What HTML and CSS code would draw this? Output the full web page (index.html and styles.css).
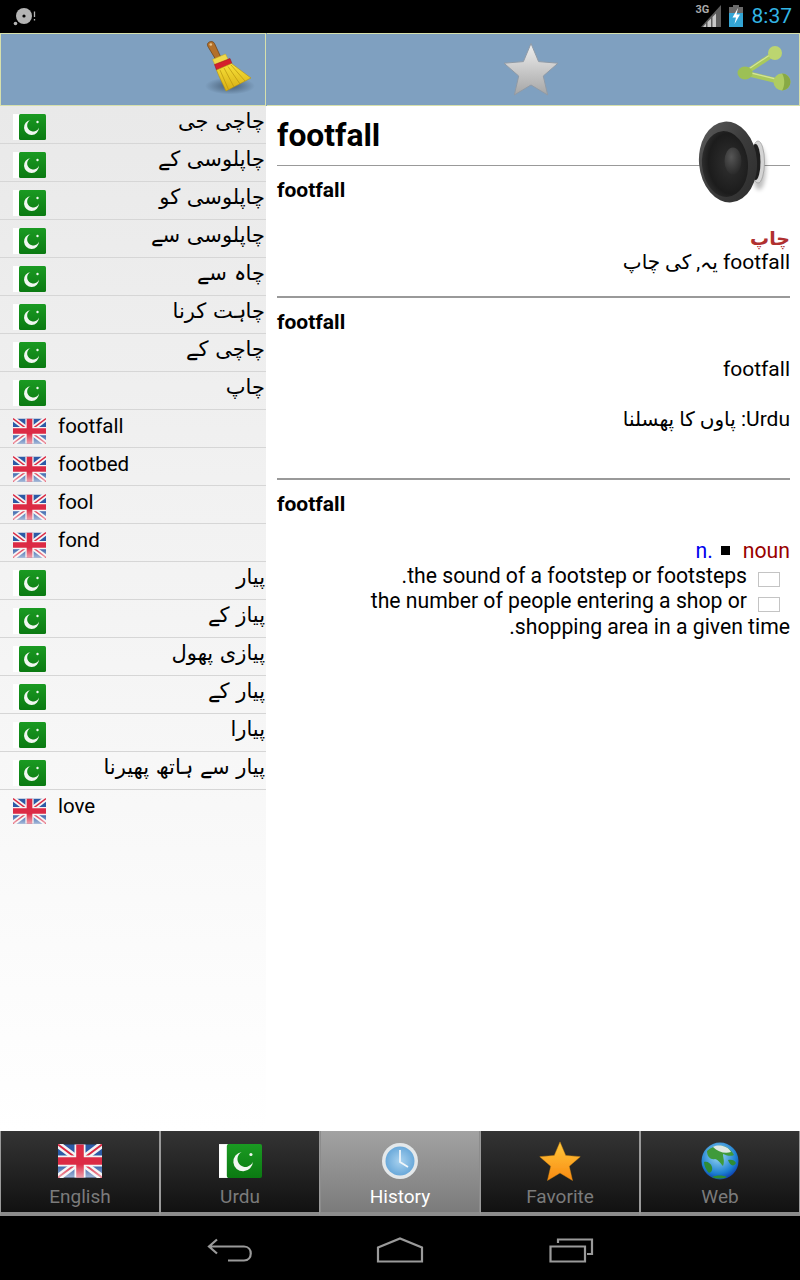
FILE: index.html
```html
<!DOCTYPE html>
<html lang="en">
<head>
<meta charset="utf-8">
<title>Dictionary</title>
<link rel="stylesheet" href="styles.css">
</head>
<body>
<svg class="defs" width="0" height="0" aria-hidden="true">
  <defs>
    <filter id="soft" x="-10%" y="-10%" width="120%" height="120%"><feGaussianBlur stdDeviation="0.5"/></filter>
    <filter id="blur" x="-40%" y="-40%" width="180%" height="180%"><feGaussianBlur stdDeviation="2"/></filter>
    <linearGradient id="gStar" x1="0" y1="0" x2="0" y2="1"><stop offset="0" stop-color="#f0f0f0"/><stop offset="1" stop-color="#a5a5a5"/></linearGradient>
    <linearGradient id="gFav" x1="0" y1="0" x2="0" y2="1"><stop offset="0" stop-color="#ffc93c"/><stop offset="1" stop-color="#f98a12"/></linearGradient>
    <linearGradient id="gGreen" x1="0" y1="0" x2="0" y2="1"><stop offset="0" stop-color="#1a9a22"/><stop offset="1" stop-color="#0b7a12"/></linearGradient>
    <linearGradient id="gBroom" x1="0" y1="0" x2="0" y2="1"><stop offset="0" stop-color="#f7e23a"/><stop offset="1" stop-color="#d8ae12"/></linearGradient>
    <linearGradient id="gBody" x1="0" y1="0" x2="1" y2="1"><stop offset="0" stop-color="#5e5e5e"/><stop offset="0.5" stop-color="#3c3c3c"/><stop offset="1" stop-color="#2c2c2c"/></linearGradient>
    <linearGradient id="gGloss" x1="0" y1="0" x2="0" y2="1"><stop offset="0.6" stop-color="#fff" stop-opacity="0"/><stop offset="1" stop-color="#fff" stop-opacity="0.55"/></linearGradient>
    <radialGradient id="gCone" cx="0.6" cy="0.5" r="0.65"><stop offset="0" stop-color="#303030"/><stop offset="0.7" stop-color="#1c1c1c"/><stop offset="1" stop-color="#333"/></radialGradient>
    <radialGradient id="gCap" cx="0.4" cy="0.35" r="0.7"><stop offset="0" stop-color="#565656"/><stop offset="1" stop-color="#282828"/></radialGradient>
    <radialGradient id="gShadow"><stop offset="0" stop-color="#33475c" stop-opacity="0.75"/><stop offset="1" stop-color="#33475c" stop-opacity="0"/></radialGradient>
    <radialGradient id="gSea" cx="0.45" cy="0.35" r="0.7"><stop offset="0" stop-color="#9fdcf5"/><stop offset="0.7" stop-color="#1c7fd0"/><stop offset="1" stop-color="#0a2fa8"/></radialGradient>
    <radialGradient id="gClock" cx="0.5" cy="0.5" r="0.5"><stop offset="0" stop-color="#a9d2ef"/><stop offset="1" stop-color="#6aa9da"/></radialGradient>

    <symbol id="flag-uk" viewBox="0 0 32 24">
      <rect width="32" height="24" rx="1" fill="#2c5aa6"/>
      <path d="M0 0L32 24M32 0L0 24" stroke="#f4f4f4" stroke-width="5"/>
      <path d="M0 0L32 24M32 0L0 24" stroke="#dc2a44" stroke-width="1.4"/>
      <path d="M16 0V24M0 12H32" stroke="#f4f4f4" stroke-width="8"/>
      <path d="M16 0V24M0 12H32" stroke="#dc2a44" stroke-width="5.5"/>
      <rect width="32" height="24" fill="url(#gGloss)"/>
    </symbol>
    <symbol id="flag-pk" viewBox="0 0 33 26">
      <rect width="7" height="26" fill="#fff"/>
      <rect x="6" width="27" height="26" rx="1.5" fill="url(#gGreen)"/>
      <path d="M17.500 6A7.500 7.500 0 1 0 26 13.500A6.100 6.100 0 1 1 17.500 6Z" fill="#f2f7f2"/>
      <circle cx="24.500" cy="8" r="1.200" fill="#f2f7f2"/>
    </symbol>
    <symbol id="star" viewBox="0 0 56 54">
      <path d="M28 1.500L35.600 19.600 55 21.200 40.300 34 44.700 53 28 43 11.300 53 15.700 34 1 21.200 20.400 19.600Z" stroke-linejoin="round" filter="url(#soft)"/>
    </symbol>
  </defs>
</svg>

<div class="app">
  <header class="status">
    <svg class="st-alert" viewBox="0 0 24 20" width="24" height="20"><circle cx="11" cy="9" r="8" fill="#b4b4b4"/><circle cx="11" cy="9" r="1.600" fill="#000"/><circle cx="2.500" cy="16.500" r="1.800" fill="#b4b4b4"/><path d="M21.500 4.500V10M21.500 12V13.500" stroke="#b4b4b4" stroke-width="1.300"/></svg>
    <div class="st-right">
      <span class="st-3g">3G</span>
      <svg class="st-signal" viewBox="0 0 20 22" width="20" height="22"><path d="M0 22L20 0V22Z" fill="#5d5d5d"/><path d="M2 22L5 18.500V22ZM6.500 22V17L10 13.500V22ZM11.500 22V12L15 8.500V22Z" fill="#c8c8c8"/></svg>
      <svg class="st-batt" viewBox="0 0 14 22" width="14" height="22"><rect x="4" width="6" height="2" fill="#6a6a6a"/><rect y="2" width="14" height="6" fill="#6a6a6a"/><rect y="8" width="14" height="14" fill="#33a5d5"/><path d="M9 3L3.500 12.500H7L5.500 19 11 9.500H7.500Z" fill="#fff"/></svg>
      <span class="st-time">8:37</span>
    </div>
  </header>

  <div class="bars">
    <div class="bar bar-left">
      <svg class="broom" viewBox="0 0 54 60" width="54" height="60">
        <ellipse cx="25" cy="48" rx="25" ry="8.500" fill="url(#gShadow)"/>
        <path d="M2.500 6C3.500 3 8 2.500 9.500 5.500L16 19.500 11 22 3.500 9.500C2.800 8.500 2.200 7 2.500 6Z" fill="#b3702a" stroke="#6b3e10" stroke-width="0.700"/>
        <circle cx="5.800" cy="6.500" r="1.300" fill="#e9c48a"/>
        <path d="M7.500 21.500L20.500 16 23.500 22 10.500 28Z" fill="#efd94c" stroke="#c9a814" stroke-width="0.500"/>
        <path d="M9.500 26.500L25 20.500 27 25.500 11.500 32Z" fill="#d51f2c" stroke="#8c1018" stroke-width="0.500"/>
        <path d="M11.500 32L26.500 25.500 46 40 21 53C18 46 14 39 11.500 32Z" fill="url(#gBroom)" stroke="#b9930e" stroke-width="0.600"/>
        <path d="M15 32L23.500 51.500M19 30L29 49M23 28.500L35 46M26 27L40 43" stroke="#b9930e" stroke-width="0.700" fill="none"/>
      </svg>
    </div>
    <div class="bar bar-right">
      <svg class="star-btn" width="56" height="54"><use href="#star" fill="url(#gStar)" stroke="#8f9aa6" stroke-width="1"/></svg>
      <svg class="share" viewBox="0 0 54 46" width="54" height="46">
        <path d="M8 27L38 7M8 27L45 36" stroke="#a9c95c" stroke-width="5" fill="none"/>
        <path d="M8 25.500L38 5.500M8 25.500L45 34.500" stroke="#d3e397" stroke-width="1.300" fill="none"/>
        <circle cx="38" cy="7" r="7" fill="#bcd570"/>
        <ellipse cx="8" cy="27" rx="7.500" ry="6.500" fill="#9cc055"/>
        <circle cx="45" cy="36" r="8.500" fill="#afcc62"/>
        <path d="M45 27.500A8.500 8.500 0 0 1 45 44.500C48 40 48 32 45 27.500Z" fill="#88a945"/>
      </svg>
    </div>
  </div>

  <main class="content">
    <aside class="history">
      <div class="row row-ur"><svg class="flag"><use href="#flag-pk"/></svg><span class="ur">چاچی جی</span></div>
      <div class="row row-ur"><svg class="flag"><use href="#flag-pk"/></svg><span class="ur">چاپلوسی کے</span></div>
      <div class="row row-ur"><svg class="flag"><use href="#flag-pk"/></svg><span class="ur">چاپلوسی کو</span></div>
      <div class="row row-ur"><svg class="flag"><use href="#flag-pk"/></svg><span class="ur">چاپلوسی سے</span></div>
      <div class="row row-ur"><svg class="flag"><use href="#flag-pk"/></svg><span class="ur">چاہ سے</span></div>
      <div class="row row-ur"><svg class="flag"><use href="#flag-pk"/></svg><span class="ur">چاہت کرنا</span></div>
      <div class="row row-ur"><svg class="flag"><use href="#flag-pk"/></svg><span class="ur">چاچی کے</span></div>
      <div class="row row-ur"><svg class="flag"><use href="#flag-pk"/></svg><span class="ur">چاپ</span></div>
      <div class="row"><svg class="flag"><use href="#flag-uk"/></svg><span class="en">footfall</span></div>
      <div class="row"><svg class="flag"><use href="#flag-uk"/></svg><span class="en">footbed</span></div>
      <div class="row"><svg class="flag"><use href="#flag-uk"/></svg><span class="en">fool</span></div>
      <div class="row"><svg class="flag"><use href="#flag-uk"/></svg><span class="en">fond</span></div>
      <div class="row row-ur"><svg class="flag"><use href="#flag-pk"/></svg><span class="ur">پیار</span></div>
      <div class="row row-ur"><svg class="flag"><use href="#flag-pk"/></svg><span class="ur">پیاز کے</span></div>
      <div class="row row-ur"><svg class="flag"><use href="#flag-pk"/></svg><span class="ur">پیازی پھول</span></div>
      <div class="row row-ur"><svg class="flag"><use href="#flag-pk"/></svg><span class="ur">پیار کے</span></div>
      <div class="row row-ur"><svg class="flag"><use href="#flag-pk"/></svg><span class="ur">پیارا</span></div>
      <div class="row row-ur"><svg class="flag"><use href="#flag-pk"/></svg><span class="ur">پیار سے ہاتھ پھیرنا</span></div>
      <div class="row row-last"><svg class="flag"><use href="#flag-uk"/></svg><span class="en">love</span></div>
    </aside>

    <article class="detail">
      <svg class="speaker" viewBox="0 0 72 84" width="72" height="84">
        <ellipse cx="61" cy="48" rx="7" ry="22" fill="#000" opacity="0.250" filter="url(#blur)"/>
        <ellipse cx="60" cy="42" rx="6.500" ry="21" fill="#d4d4d4" stroke="#a0a0a0" stroke-width="0.800"/>
        <ellipse cx="57.500" cy="42" rx="5" ry="18" fill="#1e1e1e"/>
        <ellipse cx="30" cy="42" rx="29" ry="40.500" fill="url(#gBody)" transform="rotate(-5 30 42)"/>
        <ellipse cx="27" cy="44" rx="23" ry="33" fill="url(#gCone)" transform="rotate(-5 27 44)"/>
        <ellipse cx="35" cy="41" rx="8.500" ry="13.500" fill="url(#gCap)"/>
      </svg>
      <section class="sec sec-top">
        <h1 class="word">footfall</h1>
        <h2 class="head head-first">footfall</h2>
        <div class="gloss gloss-first">
          <p class="ar-red">چاپ</p>
          <p class="ar">footfall <span class="ur-inline">یہ, کی چاپ</span></p>
        </div>
      </section>
      <section class="sec sec-mid">
        <h2 class="head">footfall</h2>
        <div class="gloss gloss-mid">
          <p class="ar plain">footfall</p>
          <p class="ar plain plain-urdu">Urdu: <span class="ur-inline">پاوں کا پھسلنا</span></p>
        </div>
      </section>
      <section class="sec-last">
        <h2 class="head">footfall</h2>
        <div class="pos"><span class="pos-n">n.</span><span class="pos-sq"></span><span class="pos-noun">noun</span></div>
        <p class="def"><span class="box"></span>the sound of a footstep or footsteps.</p>
        <p class="def"><span class="box"></span>the number of people entering a shop or<br>shopping area in a given time.</p>
      </section>
    </article>
  </main>

  <nav class="tabs">
    <div class="tab"><div class="tab-icon"><svg class="tab-flag"><use href="#flag-uk"/></svg></div><span>English</span></div>
    <div class="tab"><div class="tab-icon"><svg class="tab-flag tab-pk"><use href="#flag-pk"/></svg></div><span>Urdu</span></div>
    <div class="tab tab-on">
      <div class="tab-icon"><svg viewBox="0 0 38 38" width="38" height="38"><circle cx="19" cy="19" r="18" fill="#e4e8ea"/><circle cx="19" cy="19" r="14.500" fill="url(#gClock)"/><path d="M19 8V20L27 25" stroke="#f0f6fa" stroke-width="1.800" fill="none"/></svg></div>
      <span>History</span>
    </div>
    <div class="tab"><div class="tab-icon"><svg width="42" height="42" viewBox="0 0 56 54"><use href="#star" fill="url(#gFav)" stroke="#d98a10" stroke-width="0.600"/></svg></div><span>Favorite</span></div>
    <div class="tab">
      <div class="tab-icon"><svg viewBox="0 0 38 38" width="38" height="38"><circle cx="19" cy="19" r="18.500" fill="url(#gSea)"/><path d="M6 9C10 5 16 3 22 4 27 5 31 9 33 13 29 15 25 13 22 12 22 16 24 19 22 24 20 22 18 18 14 17 10 18 6 15 6 9Z" fill="#3f9a3a"/><path d="M12 5C18 2 27 4 30 10 24 12 17 10 12 5Z" fill="#dfe8e2"/><path d="M3 20C6 19 10 21 11 25 12 29 9 32 7 30 5 27 3 24 3 20ZM27 18C30 17 34 18 35 21 33 25 29 24 27 18ZM11 35C15 33 22 33 26 35 22 37 15 37 11 35Z" fill="#2f8c34"/></svg></div>
      <span>Web</span>
    </div>
  </nav>

  <footer class="sysnav">
    <svg viewBox="0 0 46 26" width="46" height="26" class="nav-back"><path d="M10 2.500L2 9.500 10 16.500M2.500 9.500H37C46 9.500 46 23.500 37 23.500H21" fill="none" stroke="#9a9a9a" stroke-width="2.200"/></svg>
    <svg viewBox="0 0 48 26" width="48" height="26" class="nav-home"><path d="M2 10.500L24 1.500 46 10.500V24.500H2Z" fill="none" stroke="#9a9a9a" stroke-width="2.200"/></svg>
    <svg viewBox="0 0 46 26" width="46" height="26" class="nav-recent"><path d="M1.500 9.500H36V24.500H1.500Z" fill="none" stroke="#9a9a9a" stroke-width="2.200"/><path d="M9 6V2.500H43V17H38" fill="none" stroke="#9a9a9a" stroke-width="2.200"/></svg>
  </footer>
</div>
</body>
</html>
```
FILE: styles.css
```css
* { box-sizing: border-box; }
html, body { margin: 0; padding: 0; }
body { background: #fff; font-family: Roboto, "Noto Sans", "DejaVu Sans", sans-serif; color: #000; }
p, h1, h2 { margin: 0; }
.defs { position: absolute; }

.app { width: 800px; height: 1280px; display: flex; flex-direction: column; overflow: hidden; }

/* status bar */
.status { height: 33px; flex: none; background: #000; display: flex; justify-content: space-between; align-items: center; padding: 0 8px 0 13px; }
.st-alert { margin-top: 1px; }
.st-right { position: relative; display: flex; align-items: center; }
.st-signal { margin-right: 8px; margin-top: -2px; }
.st-3g { position: absolute; left: -5px; top: 4px; font-size: 11px; line-height: 12px; font-weight: 700; color: #aaa; }
.st-batt { margin-right: 9px; margin-top: -2px; }
.st-time { color: #33b5e5; font-size: 21px; line-height: 33px; }

/* action bars */
.bars { height: 73px; flex: none; display: flex; background: #7fa0c0; }
.bar { border: 1px solid #d7e0ac; display: flex; }
.bar-left { width: 266px; justify-content: flex-end; }
.broom { margin: 4px 6px 0 0; }
.bar-right { flex: 1; justify-content: flex-end; align-items: flex-start; position: relative; margin-left: 1px; border-left: 0; padding-right: 8px; }
.star-btn { position: absolute; left: 236px; top: 8px; }
.share { margin-top: 12px; }

/* main */
.content { flex: 1; min-height: 0; display: flex; }
.history { width: 266px; flex: none; margin-right: 1px; background: linear-gradient(#e9e9e9, #fff); }
.row { height: 38px; border-bottom: 1px solid #d6d6d6; display: flex; align-items: flex-start; padding: 7px 0 0 13px; }
.row-last { border-bottom: 0; }
.flag { width: 33px; height: 26px; flex: none; margin-top: 1px; }
.en { margin-left: 12px; font-size: 20.500px; line-height: 24px; margin-top: -3px; }
.ur { margin-left: auto; direction: rtl; font-family: "DejaVu Sans", "Noto Sans", sans-serif; font-size: 21px; line-height: 24px; margin-top: -4px; padding-right: 1px; }

/* detail */
.detail { flex: 1; position: relative; padding: 0 10px; }
.speaker { position: absolute; left: 431px; top: 14px; }
.word { font-size: 31.800px; font-weight: 700; line-height: 38px; padding-top: 10px; height: 60px; border-bottom: 1px solid #999; }
.head { font-size: 21px; font-weight: 700; line-height: 24px; color: #000; }
.sec { border-bottom: 2px solid #999; }
.sec-top { height: 192px; }
.head-first { margin-top: 12px; }
.gloss { direction: rtl; font-size: 21px; }
.gloss-first { margin-top: 24px; }
.ar-red { color: #b03030; font-family: "DejaVu Sans", sans-serif; font-weight: 700; font-size: 19px; line-height: 24px; }
.ar { font-family: Roboto, "DejaVu Sans", sans-serif; font-size: 21px; line-height: 24px; }
.ur-inline { font-size: 20px; }
.sec-mid { height: 182px; padding-top: 12px; }
.gloss-mid { margin-top: 23px; }
.plain-urdu { margin-top: 26px; }
.sec-last { padding-top: 12px; }
.pos { margin: 23px 0 0; display: flex; justify-content: flex-end; align-items: center; font-size: 21.200px; line-height: 24px; }
.pos-n { color: #0000ee; }
.pos-sq { width: 9px; height: 9px; background: #000; margin: 0 13px 2px 8px; }
.pos-noun { color: #990000; }
.def { direction: rtl; font-size: 21.200px; line-height: 25.400px; }
.box { display: inline-block; width: 22px; height: 15px; border: 1px solid #c4c4c4; margin: 0 10px 0 11px; vertical-align: -4px; }

/* tabs */
.tabs { height: 85px; flex: none; display: flex; background: #9a9a9a; }
.tab { width: 160px; display: flex; flex-direction: column; align-items: center; padding-top: 8px; background: linear-gradient(#343434, #111); color: #7b7b7b; border-left: 1px solid #9a9a9a; border-right: 1px solid #9a9a9a; border-bottom: 4px solid #8c8c8c; font-size: 19px; line-height: 24px; }
.tab-on { background: linear-gradient(#a2a2a2, #7b7b7b); color: #fff; border-color: #8c8c8c; }
.tab-icon { height: 44px; margin-bottom: 2px; display: flex; align-items: center; justify-content: center; }
.tab-flag { width: 44px; height: 34px; }
.tab-pk { width: 43px; height: 34px; }

/* system nav */
.sysnav { height: 64px; flex: none; background: #000; display: flex; align-items: flex-start; padding-top: 21px; }
.nav-back { margin-left: 207px; }
.nav-home { margin-left: 123px; }
.nav-recent { margin-left: 125px; }
```
